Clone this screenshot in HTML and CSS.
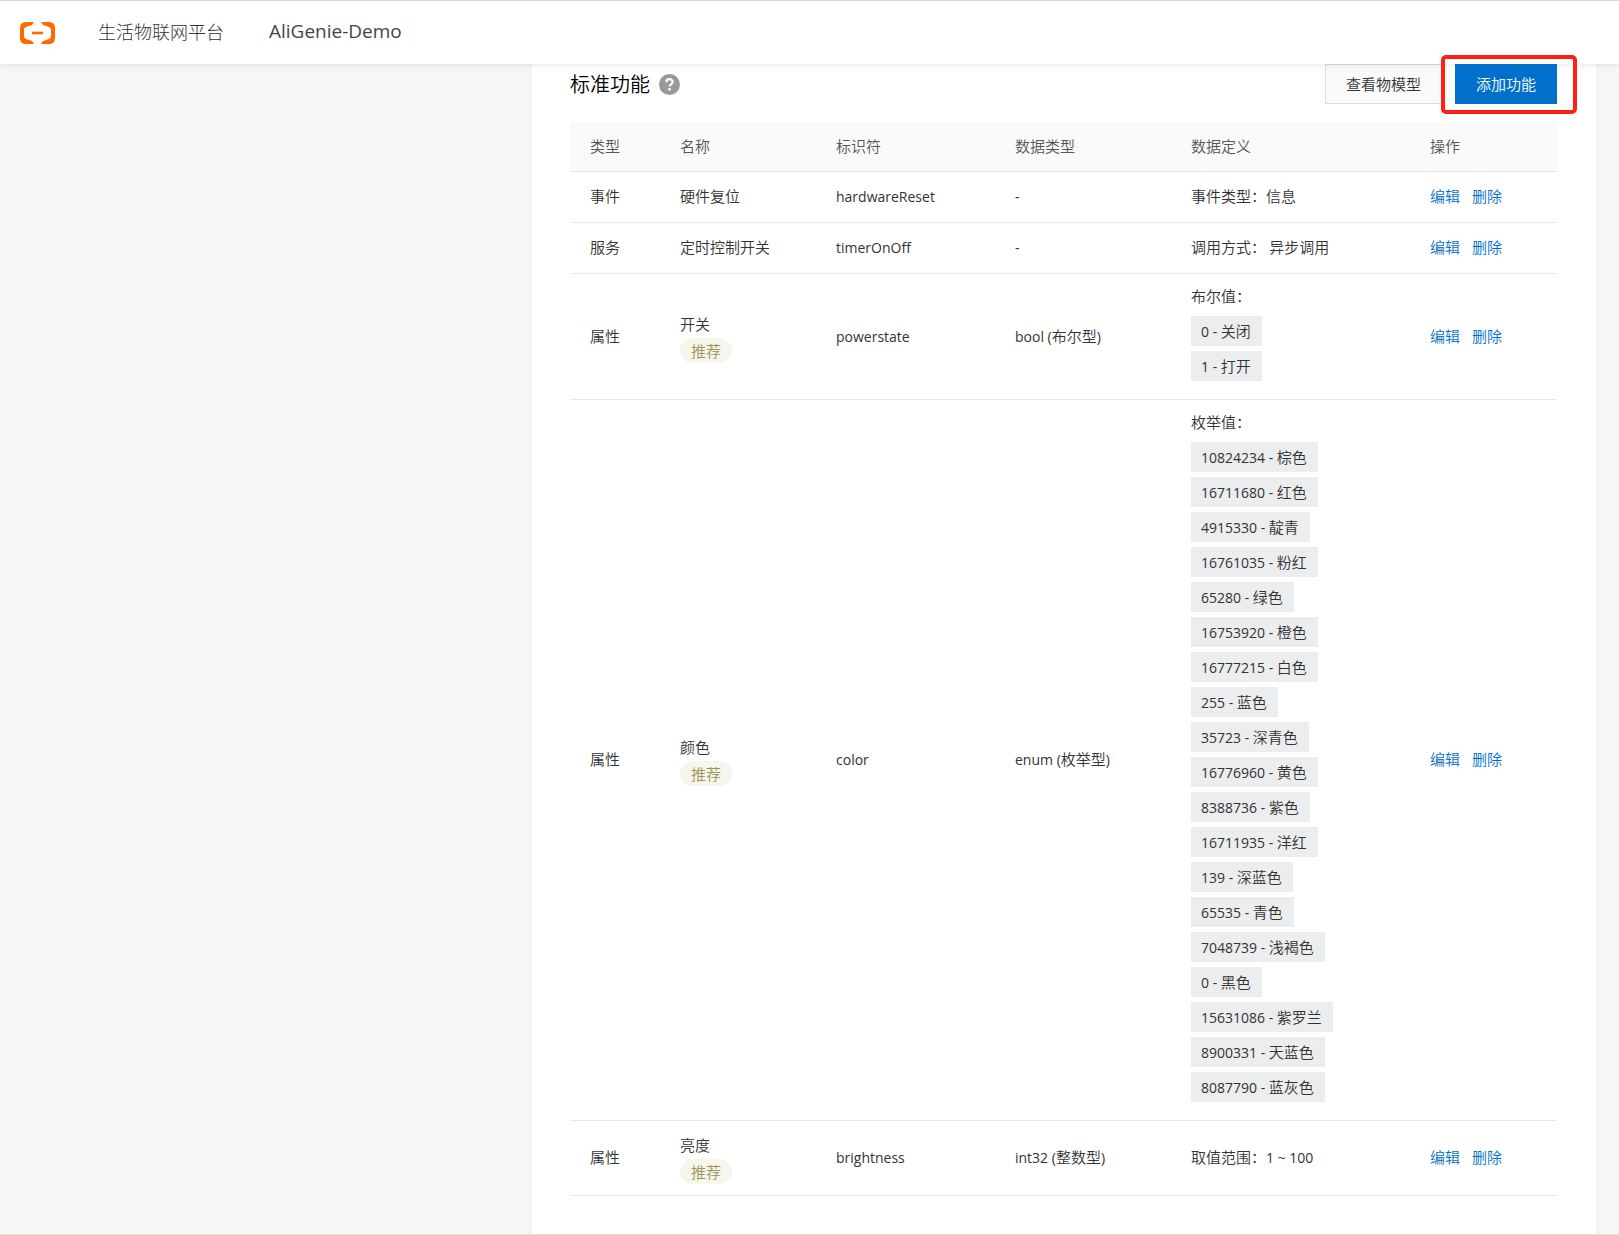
FILE: index.html
```html
<!DOCTYPE html>
<html lang="zh-CN">
<head>
    <meta charset="UTF-8">
    <meta name="viewport" content="width=device-width, initial-scale=1.0">
    <title>生活物联网平台</title>
    <link rel="stylesheet" href="styles.css">
</head>
<body>
<header class="topbar">
    <a class="logo" href="#" aria-label="首页">
        <svg width="35" height="22" viewBox="0 0 35 22">
            <path fill="#ff6a00" d="M14 0H6Q0 0 0 6v10q0 6 6 6h8l-2-3-6-2q-2-.6-2-3V8q0-2.400 2-3l6-2zM21 0h8q6 0 6 6v10q0 6-6 6h-8l2-3 6-2q2-.6 2-3V8q0-2.400-2-3l-6-2z"/>
            <path fill="#ff6a00" d="M12 9.700h11v2.600H12z"/>
        </svg>
    </a>
    <a class="topbar-link" href="#">生活物联网平台</a>
    <a class="topbar-link project" href="#">AliGenie-Demo</a>
</header>

<div class="layout">
    <aside class="sidebar"></aside>
    <main class="panel">
        <div class="toolbar">
            <h2>标准功能</h2>
            <svg class="help" width="21" height="21" viewBox="0 0 21 21">
                <circle cx="10.500" cy="10.500" r="10.500" fill="#999"/>
                <path d="M7.400 8.200C7.400 4.200 13.600 4.200 13.600 8c0 2.200-3 2.300-3 4.600" fill="none" stroke="#fff" stroke-width="2.200"/>
                <circle cx="10.600" cy="15.300" r="1.400" fill="#fff"/>
            </svg>
            <div class="actions">
                <button class="btn" type="button">查看物模型</button>
                <div class="highlight">
                    <button class="btn btn-primary" type="button">添加功能</button>
                </div>
            </div>
        </div>

        <table>
            <colgroup>
                <col class="col-type">
                <col class="col-name">
                <col class="col-id">
                <col class="col-data">
                <col class="col-def">
                <col>
            </colgroup>
            <thead>
            <tr>
                <th>类型</th>
                <th>名称</th>
                <th>标识符</th>
                <th>数据类型</th>
                <th>数据定义</th>
                <th>操作</th>
            </tr>
            </thead>
            <tbody>
            <tr>
                <td>事件</td>
                <td>硬件复位</td>
                <td><span class="en">hardwareReset</span></td>
                <td><span class="en">-</span></td>
                <td>事件类型：信息</td>
                <td><div class="ops"><a href="#">编辑</a><a href="#">删除</a></div></td>
            </tr>
            <tr>
                <td>服务</td>
                <td>定时控制开关</td>
                <td><span class="en">timerOnOff</span></td>
                <td><span class="en">-</span></td>
                <td>调用方式： 异步调用</td>
                <td><div class="ops"><a href="#">编辑</a><a href="#">删除</a></div></td>
            </tr>
            <tr>
                <td>属性</td>
                <td class="name">开关<span class="badge">推荐</span></td>
                <td><span class="en">powerstate</span></td>
                <td><span class="en">bool (</span>布尔型<span class="en">)</span></td>
                <td>
                    布尔值：
                    <ul class="values">
                        <li><span class="en">0 - </span>关闭</li>
                        <li><span class="en">1 - </span>打开</li>
                    </ul>
                </td>
                <td><div class="ops"><a href="#">编辑</a><a href="#">删除</a></div></td>
            </tr>
            <tr>
                <td>属性</td>
                <td class="name">颜色<span class="badge">推荐</span></td>
                <td><span class="en">color</span></td>
                <td><span class="en">enum (</span>枚举型<span class="en">)</span></td>
                <td>
                    枚举值：
                    <ul class="values">
                        <li><span class="en">10824234 - </span>棕色</li>
                        <li><span class="en">16711680 - </span>红色</li>
                        <li><span class="en">4915330 - </span>靛青</li>
                        <li><span class="en">16761035 - </span>粉红</li>
                        <li><span class="en">65280 - </span>绿色</li>
                        <li><span class="en">16753920 - </span>橙色</li>
                        <li><span class="en">16777215 - </span>白色</li>
                        <li><span class="en">255 - </span>蓝色</li>
                        <li><span class="en">35723 - </span>深青色</li>
                        <li><span class="en">16776960 - </span>黄色</li>
                        <li><span class="en">8388736 - </span>紫色</li>
                        <li><span class="en">16711935 - </span>洋红</li>
                        <li><span class="en">139 - </span>深蓝色</li>
                        <li><span class="en">65535 - </span>青色</li>
                        <li><span class="en">7048739 - </span>浅褐色</li>
                        <li><span class="en">0 - </span>黑色</li>
                        <li><span class="en">15631086 - </span>紫罗兰</li>
                        <li><span class="en">8900331 - </span>天蓝色</li>
                        <li><span class="en">8087790 - </span>蓝灰色</li>
                    </ul>
                </td>
                <td><div class="ops"><a href="#">编辑</a><a href="#">删除</a></div></td>
            </tr>
            <tr>
                <td>属性</td>
                <td class="name">亮度<span class="badge">推荐</span></td>
                <td><span class="en">brightness</span></td>
                <td><span class="en">int32 (</span>整数型<span class="en">)</span></td>
                <td>取值范围：<span class="en">1 ~ 100</span></td>
                <td><div class="ops"><a href="#">编辑</a><a href="#">删除</a></div></td>
            </tr>
            </tbody>
        </table>
    </main>
</div>
</body>
</html>
```
FILE: styles.css
```css
:root {
    --primary-color: #0070cc;
    --background-color: #f6f6f6;
    --line-color: #e8e8e8;
    --text-color: #333;
}
* {
    box-sizing: border-box;
}
body {
    font-family: "Noto Sans CJK SC", sans-serif;
    font-size: 15px;
    font-weight: 350;
    line-height: 20px;
    color: var(--text-color);
    background: var(--background-color);
    margin: 0;
    min-height: 100vh;
    display: flex;
    flex-direction: column;
    border-bottom: 1px solid #ddd;
}
a {
    color: var(--primary-color);
    text-decoration: none;
}
.topbar {
    position: relative;
    z-index: 1;
    display: flex;
    align-items: center;
    height: 64px;
    padding: 0 20px;
    background: #fff;
    border-top: 1px solid #d8d8dc;
    box-shadow: 0 1px 6px rgba(0,0,0,0.1);
}
.logo {
    display: flex;
    margin-right: 43px;
}
.topbar-link {
    font-size: 18px;
    font-weight: 300;
    line-height: 24px;
    color: var(--text-color);
    padding-bottom: 3px;
    margin-right: 45px;
}
.project {
    font-family: "Open Sans", sans-serif;
    font-size: 19px;
    font-weight: 400;
    color: #444;
}
.layout {
    display: flex;
    flex: 1;
}
.sidebar {
    width: 532px;
    flex-shrink: 0;
}
.panel {
    flex: 1;
    margin-right: 23px;
    padding: 0 39px 37px 38px;
    background: #fff;
}
.toolbar {
    display: flex;
    align-items: center;
    margin-bottom: 18px;
}
.toolbar h2 {
    margin: 0 9px 0 0;
    font-size: 20px;
    line-height: 28px;
    font-weight: 350;
    color: #000;
}
.actions {
    display: flex;
    gap: 13px;
    margin-left: auto;
}
.btn {
    height: 40px;
    padding: 0 20px 1px;
    font: inherit;
    color: var(--text-color);
    background: #fafafa;
    border: 1px solid #ddd;
    cursor: pointer;
}
.btn-primary {
    color: #fff;
    background: var(--primary-color);
    border-color: var(--primary-color);
}
/* red frame drawn over the header and the neighbouring button */
.highlight {
    position: relative;
    z-index: 2;
}
.highlight::after {
    content: "";
    position: absolute;
    inset: -9px -20px -10px -14px;
    border: 4px solid #ff2015;
    border-radius: 5px;
    pointer-events: none;
}
table {
    width: 100%;
    table-layout: fixed;
    border-collapse: separate;
    border-spacing: 0;
}
.col-type { width: 90px; }
.col-name { width: 156px; }
.col-id { width: 179px; }
.col-data { width: 176px; }
.col-def { width: 239px; }
th, td {
    padding: 12px 0 14px 20px;
    height: 51px;
    text-align: left;
    vertical-align: middle;
    border-bottom: 1px solid var(--line-color);
}
th {
    height: 50px;
    font-weight: 350;
    color: #555;
    background: #fafafa;
}
.en {
    font-family: "Open Sans", sans-serif;
    font-size: 14px;
    line-height: 14px;
    font-weight: 400;
}
.name {
    padding-top: 12px;
    padding-bottom: 11px;
    line-height: 24px;
}
.badge {
    display: block;
    width: fit-content;
    margin-top: 2px;
    padding: 0 11px;
    line-height: 25px;
    color: #9f9257;
    background: #f6f6ec;
    border-radius: 13px;
}
.values {
    list-style: none;
    margin: 10px 0 0;
    padding: 0;
}
.values li {
    width: fit-content;
    height: 30px;
    margin-bottom: 5px;
    padding: 0 11px 0 10px;
    line-height: 29px;
    background: #ebedee;
}
.values li:last-child {
    margin-bottom: 4px;
}
.ops {
    display: flex;
    gap: 12px;
}
```
